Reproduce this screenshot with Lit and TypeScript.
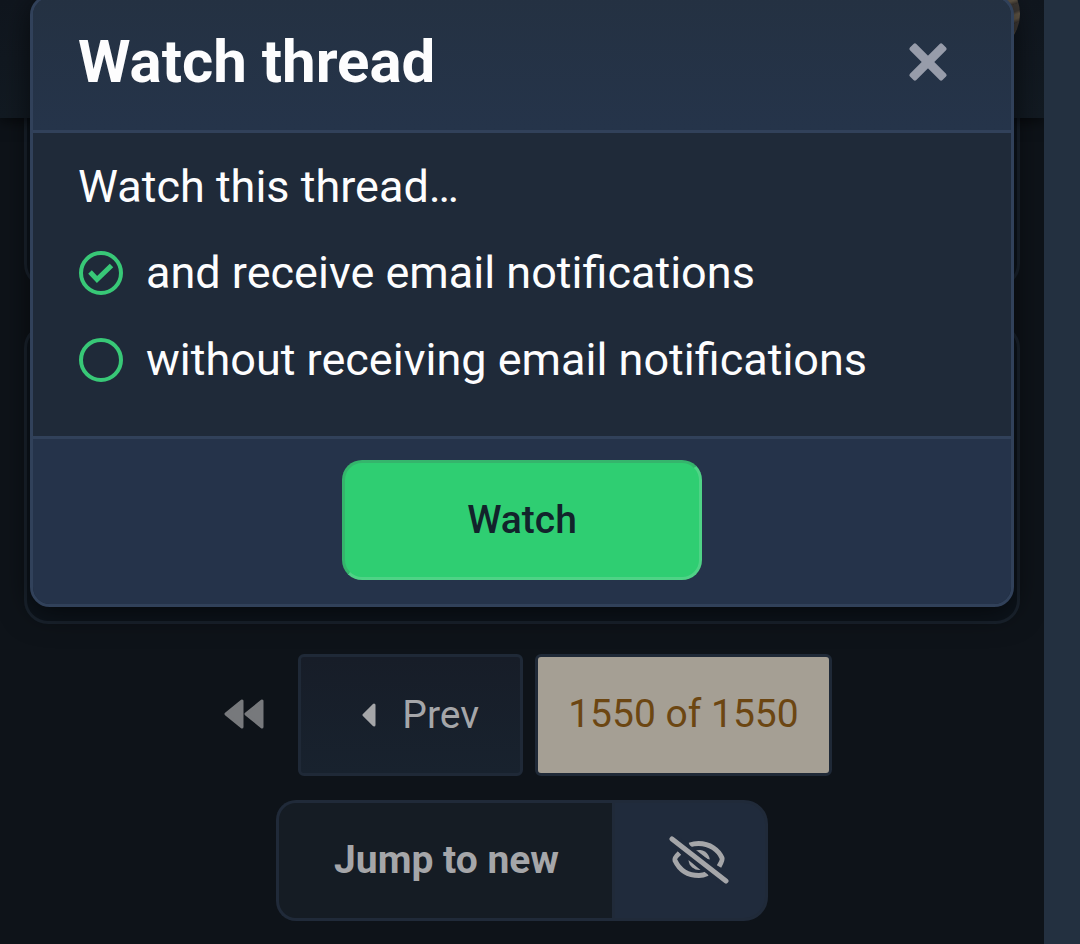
import { LitElement, html, css } from "lit";
import { customElement, state } from "lit/decorators.js";

@customElement("watch-dialog")
class WatchDialog extends LitElement {
  @state() private choice = "email";

  static styles = css`
    :host {
      display: block;
      box-sizing: border-box;
      overflow: hidden;
      color: #fdfdfe;
      background: #1f2a39;
      border: 3px solid #31415a;
      border-radius: 20px;
      box-shadow: 0 6px 30px rgba(0, 0, 0, 0.6);
    }
    .head {
      display: flex;
      align-items: center;
      justify-content: space-between;
      padding: 22px 56px 26px 45px;
      border-bottom: 3px solid #31415a;
      background: linear-gradient(#243142, #25344a);
    }
    h1 {
      margin: 0;
      font-size: 60px;
      line-height: 84px;
      font-weight: 700;
    }
    .close {
      display: grid;
      padding: 6px;
      border: 0;
      background: none;
      color: #979caa;
    }
    .body {
      margin: 0;
      padding: 22px 45px 45px;
      border: 0;
      font-size: 45px;
      line-height: 63px;
    }
    legend {
      float: left;
      width: 100%;
      padding: 0;
      margin-bottom: 23px;
    }
    .choice {
      clear: both;
      display: flex;
      align-items: center;
      gap: 22px;
      margin-bottom: 24px;
    }
    .choice:last-child {
      margin-bottom: 0;
    }
    .mark {
      display: grid;
      place-items: center;
      width: 46px;
    }
    .mark > * {
      grid-area: 1 / 1;
    }
    input {
      appearance: none;
      box-sizing: border-box;
      width: 44px;
      height: 44px;
      margin: 0;
      border: 4px solid #38c877;
      border-radius: 50%;
    }
    .tick {
      visibility: hidden;
      pointer-events: none;
    }
    input:checked + .tick {
      visibility: visible;
    }
    .foot {
      display: flex;
      justify-content: center;
      padding: 21px 24px 24px;
      border-top: 3px solid #31415a;
      background: #25334a;
    }
    .watch {
      width: 360px;
      height: 120px;
      padding: 0;
      border: 3px solid;
      border-color: #35b56c #4fd386 #4fd386 #35b56c;
      border-radius: 20px;
      background: #2fce72;
      color: #12232b;
      font: 500 39px/54px Roboto, sans-serif;
    }
  `;

  private pick(event: Event) {
    this.choice = (event.target as HTMLInputElement).value;
  }

  private option(value: string, text: string) {
    return html`
      <label class="choice">
        <span class="mark">
          <input type="radio" name="mode" value=${value} .checked=${this.choice === value} @change=${this.pick} />
          <svg class="tick" width="44" height="44" viewBox="0 0 44 44" aria-hidden="true">
            <path d="M11 21 L18 28.500 L32.500 14.500" fill="none" stroke="#38c877" stroke-width="5" />
          </svg>
        </span>
        <span>${text}</span>
      </label>
    `;
  }

  render() {
    return html`
      <header class="head">
        <h1>Watch thread</h1>
        <button class="close" aria-label="Close">
          <svg width="42" height="42" viewBox="0 0 42 42" fill="currentColor" aria-hidden="true">
            <rect x="-2" y="16.500" width="46" height="9" rx="2" transform="rotate(45 21 21)" />
            <rect x="-2" y="16.500" width="46" height="9" rx="2" transform="rotate(-45 21 21)" />
          </svg>
        </button>
      </header>
      <fieldset class="body">
        <legend>Watch this thread…</legend>
        ${this.option("email", "and receive email notifications")}
        ${this.option("no_email", "without receiving email notifications")}
      </fieldset>
      <footer class="foot"><button class="watch">Watch</button></footer>
    `;
  }
}

@customElement("app-root")
class AppRoot extends LitElement {
  static styles = css`
    :host {
      display: grid;
      grid-template-columns: 1fr 36px;
      min-height: 100vh;
      font-family: Roboto, sans-serif;
      background: #233040;
    }
    .page {
      position: relative;
      overflow: hidden;
      background: #0e1319;
    }
    .top {
      display: flex;
      justify-content: flex-end;
      height: 118px;
      padding-right: 24px;
      box-sizing: border-box;
      background: linear-gradient(#10161e, #121a22);
      box-shadow: 0 3px 14px rgba(0, 0, 0, 0.6);
      position: relative;
    }
    .avatar {
      width: 80px;
      height: 80px;
      margin-top: -26px;
      border-radius: 50%;
      background: repeating-linear-gradient(160deg, #3f3a36 0 7px, #635848 10px 14px, #37322f 18px);
    }
    .thread {
      display: grid;
      grid-template-rows: 170px 300px;
      gap: 36px;
      padding: 0 24px;
    }
    .card {
      border: 3px solid #1a232e;
      border-radius: 24px;
      background: #0d141c;
    }
    .card:first-child {
      border-top: 0;
      border-radius: 0 0 24px 24px;
    }
    .pages {
      display: flex;
      justify-content: center;
      gap: 12px;
      padding-top: 30px;
    }
    .pages a {
      display: flex;
      align-items: center;
      box-sizing: border-box;
      height: 122px;
      font-size: 39px;
      line-height: 54px;
      text-decoration: none;
      color: #a5a6a9;
    }
    .pages .first {
      padding: 0 22px 3px 12px;
      color: #77797c;
    }
    .pages .prev {
      gap: 26px;
      padding: 0 41px 0 61px;
      border: 3px solid #1f2937;
      border-radius: 6px;
      background: linear-gradient(#171d28, #18222e);
    }
    .pages .current {
      padding: 0 30px 2px;
      border: 3px solid #1f2937;
      border-radius: 6px;
      background: #a59f94;
      color: #6c4612;
    }
    .jump {
      display: flex;
      justify-content: center;
      padding: 24px 0;
    }
    .jump button {
      box-sizing: border-box;
      height: 121px;
      border: 3px solid #202a39;
      color: #a5a6a9;
      font: 700 39px/54px Roboto, sans-serif;
    }
    .jump .new {
      padding: 0 53px 2px 55px;
      border-right: 0;
      border-radius: 20px 0 0 20px;
      background: #151c24;
    }
    .jump .hide {
      display: grid;
      place-items: center;
      width: 156px;
      padding: 0 0 2px 18px;
      border-radius: 0 24px 24px 0;
      background: #202b3c;
    }
    .dialog {
      position: absolute;
      top: -5px;
      left: 30px;
      right: 30px;
    }
  `;

  render() {
    return html`
      <div class="page">
        <div class="top"><div class="avatar"></div></div>
        <main class="thread">
          <div class="card"></div>
          <div class="card"></div>
        </main>
        <nav class="pages" aria-label="Pages">
          <a class="first" href="#first" aria-label="First page">
            <svg width="40" height="30" viewBox="0 0 40 30" aria-hidden="true">
              <path
                d="M2 15 L18 2 V28 Z M22 15 L38 2 V28 Z"
                fill="currentColor"
                stroke="currentColor"
                stroke-width="3"
                stroke-linejoin="round"
              />
            </svg>
          </a>
          <a class="prev" href="#prev">
            <svg width="14" height="24" viewBox="0 0 14 24" aria-hidden="true">
              <path
                d="M2 12 L12 2 V22 Z"
                fill="currentColor"
                stroke="currentColor"
                stroke-width="3"
                stroke-linejoin="round"
              />
            </svg>
            Prev
          </a>
          <a class="current" href="#page">1550 of 1550</a>
        </nav>
        <div class="jump">
          <button class="new">Jump to new</button>
          <button class="hide" aria-label="Hide">
            <svg width="60" height="48" viewBox="0 0 60 48" fill="none" stroke="#a5a6a9" aria-hidden="true">
              <path d="M20.500 9 Q25 7.500 29.500 7.500 C41 7.500 49.500 14 53 22 Q53.800 24 50 30.500" stroke-width="5" />
              <path d="M10.500 17 Q5 22 6 24.500 C10 33 18 39.500 30 39.500 Q34 39.500 38.500 37.500" stroke-width="5" />
              <path d="M26.500 14.500 A10.800 10.800 0 0 1 40.800 23.500 Q37 23.500 26.500 14.500 Z" fill="#a5a6a9" stroke="none" />
              <path d="M19.500 24 A10.800 10.800 0 0 0 31.500 34 Z" fill="#a5a6a9" stroke="none" />
              <path d="M3 3 L57 45" stroke="#202b3c" stroke-width="12" />
              <path d="M3 3 L57 45" stroke-width="5" stroke-linecap="round" />
            </svg>
          </button>
        </div>
        <watch-dialog class="dialog" role="dialog" aria-label="Watch thread"></watch-dialog>
      </div>
      <div class="rail"></div>
    `;
  }
}
